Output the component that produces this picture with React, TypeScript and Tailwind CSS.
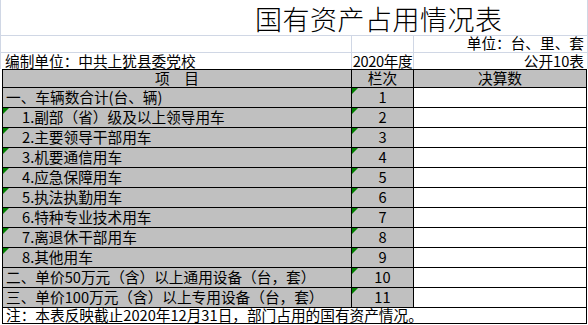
import React from "react";

const FONT = { fontFamily: '"Noto Sans CJK SC", "Noto Sans", sans-serif' };

type Row = { label: string; no: string; indent?: boolean };

const rows: Row[] = [
  { label: "一、车辆数合计(台、辆)", no: "1" },
  { label: "1.副部（省）级及以上领导用车", no: "2", indent: true },
  { label: "2.主要领导干部用车", no: "3", indent: true },
  { label: "3.机要通信用车", no: "4", indent: true },
  { label: "4.应急保障用车", no: "5", indent: true },
  { label: "5.执法执勤用车", no: "6", indent: true },
  { label: "6.特种专业技术用车", no: "7", indent: true },
  { label: "7.离退休干部用车", no: "8", indent: true },
  { label: "8.其他用车", no: "9", indent: true },
  { label: "二、单价50万元（含）以上通用设备（台，套）", no: "10" },
  { label: "三、单价100万元（含）以上专用设备（台，套）", no: "11" },
];

/* ── green "number stored as text" marker ── */
function Flag() {
  return (
    <div className="absolute left-0 top-0 w-0 h-0 border-t-[6px] border-r-[6px] border-t-[#008000] border-r-transparent" />
  );
}

export default function App() {
  return (
    <div
      className="w-[588px] h-[325px] bg-white overflow-hidden text-black text-[14.67px] leading-none whitespace-nowrap"
      style={FONT}
    >
      {/* title row */}
      <div className="flex h-[36px] border-l border-b border-r border-[#d0d7e5]">
        <div className="flex-1 flex items-end pl-[254px] pb-[3px]">
          <span className="text-[27px] font-light leading-none tracking-[0.5px]">国有资产占用情况表</span>
        </div>
      </div>

      {/* unit row */}
      <div className="flex h-[17px] border-l border-b border-[#d0d7e5]">
        <div className="w-[351px] border-r border-[#d0d7e5]" />
        <div className="w-[62px] border-r border-[#d0d7e5]" />
        <div className="w-[174px] border-r border-[#d0d7e5] flex items-end justify-end pr-[3px] pb-[1px]">
          单位：台、里、套
        </div>
      </div>

      {/* compiled-by row */}
      <div className="flex h-[16px] border-l border-[#d0d7e5]">
        <div className="w-[351px] border-r border-[#d0d7e5] flex items-end pl-[4px]">
          编制单位：中共上犹县委党校
        </div>
        <div className="w-[62px] border-r border-[#d0d7e5] flex items-end justify-center tracking-[-0.4px]">
          2020年度
        </div>
        <div className="w-[174px] border-r border-[#d0d7e5] flex items-end justify-end pr-[3px]">
          公开10表
        </div>
      </div>

      {/* table */}
      <div className="ml-[2px] w-[585px] border-l border-t border-black">
        <div className="flex h-[18px] border-b border-black bg-[#c0c0c0]">
          <div className="w-[349px] border-r border-black flex items-end justify-center pb-[1px]">项　目</div>
          <div className="w-[62px] border-r border-black flex items-end justify-center pb-[1px]">栏次</div>
          <div className="w-[173px] border-r border-black flex items-end justify-center pb-[1px]">决算数</div>
        </div>

        {rows.map((r) => (
          <div key={r.no} className="flex h-[20px] border-b border-black">
            <div
              className={`relative w-[349px] border-r border-black bg-[#c0c0c0] flex items-end pb-[2px] ${
                r.indent ? "pl-[19px]" : "pl-[3px]"
              }`}
            >
              {r.indent && <Flag />}
              {r.label}
            </div>
            <div className="relative w-[62px] border-r border-black bg-[#c0c0c0] flex items-end justify-center pb-[2px]">
              <Flag />
              {r.no}
            </div>
            <div className="w-[173px] border-r border-black bg-white" />
          </div>
        ))}

        <div className="flex h-[16px] border-b border-r border-black items-end pl-[3px]">
          注：本表反映截止2020年12月31日，部门占用的国有资产情况。
        </div>
      </div>
    </div>
  );
}
